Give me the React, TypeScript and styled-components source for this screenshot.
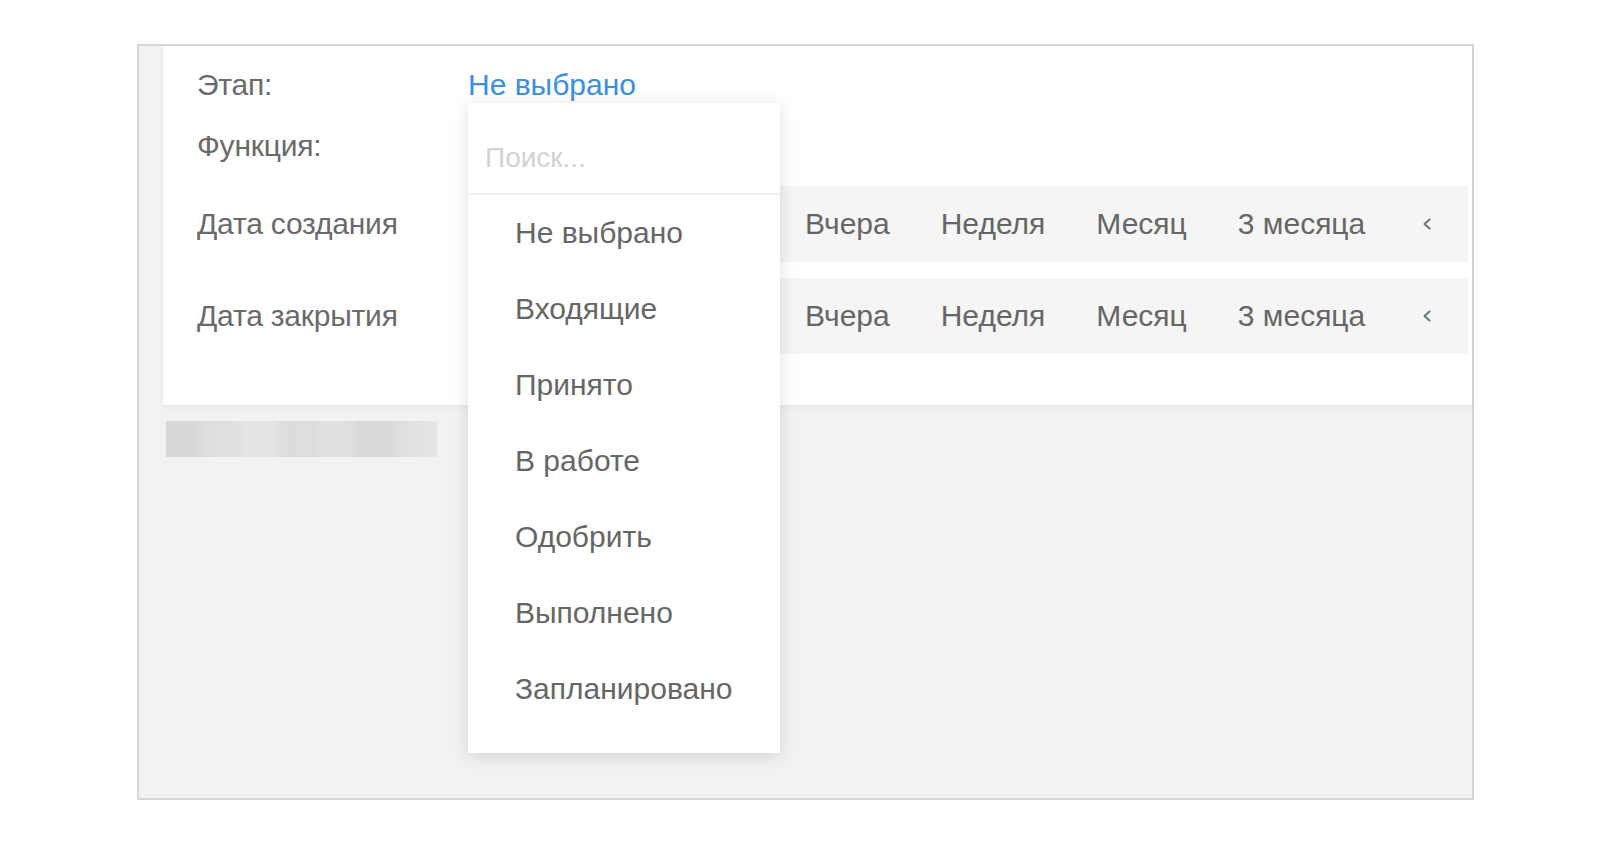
import React from "react";
import styled, { createGlobalStyle } from "styled-components";

const GlobalStyle = createGlobalStyle`
  html, body {
    margin: 0;
    padding: 0;
    background: #ffffff;
  }
  body {
    font-family: "Liberation Sans", Arial, sans-serif;
  }
`;

const Page = styled.div`
  width: 1600px;
  height: 845px;
  padding: 44px 0 0 137px;
  box-sizing: border-box;
`;

const Frame = styled.div`
  width: 1337px;
  height: 756px;
  box-sizing: border-box;
  border: 2px solid #d6d6d6;
  background: #f2f2f2;
  padding-left: 24px;
  display: flex;
  flex-direction: column;
`;

const Panel = styled.div`
  height: 359px;
  box-sizing: border-box;
  background: #ffffff;
  padding: 0 4px 0 34px;
  box-shadow: 0 2px 5px rgba(0, 0, 0, 0.05);
  display: grid;
  grid-template-columns: 271px 1fr;
  grid-template-rows: 78px 44px auto auto;
  align-content: start;
`;

const Label = styled.div<{ $mt?: number }>`
  display: flex;
  align-items: center;
  margin-top: ${(p) => p.$mt ?? 0}px;
  font-size: 30px;
  color: #6a6a6a;
  letter-spacing: -0.2px;
`;

const Cell = styled.div`
  position: relative;
  display: flex;
  align-items: center;
`;

const Trigger = styled.span`
  font-size: 30px;
  line-height: 34px;
  color: #3a8ee6;
  cursor: pointer;
`;

const Band = styled.div<{ $mt: number }>`
  margin-top: ${(p) => p.$mt}px;
  height: 76px;
  background: #f5f5f5;
  display: flex;
  align-items: center;
  gap: 51px;
  padding-left: 337px;
`;

const Period = styled.span`
  font-size: 30px;
  color: #666666;
  white-space: nowrap;
`;

const Chevron = styled.span`
  display: flex;
  margin-left: 6px;
  color: #6b7684;
`;

const Placeholder = styled.div`
  margin: 16px 0 0 3px;
  width: 271px;
  height: 36px;
  background: linear-gradient(
    90deg,
    #d7d7d7 0%,
    #d8d8d8 11%,
    #dedede 14%,
    #e0e0e0 26%,
    #e5e5e5 29%,
    #e4e4e4 40%,
    #dcdcdc 43%,
    #dddddd 55%,
    #e1e1e1 58%,
    #e0e0e0 68%,
    #d8d8d8 71%,
    #d9d9d9 82%,
    #dedede 86%,
    #e6e6e6 100%
  );
`;

const Menu = styled.div`
  position: absolute;
  left: 0;
  top: calc(50% + 18px);
  width: 312px;
  height: 650px;
  background: #ffffff;
  box-shadow: 0 3px 16px rgba(0, 0, 0, 0.13);
  z-index: 10;
  display: flex;
  flex-direction: column;
`;

const Search = styled.input`
  height: 92px;
  flex-shrink: 0;
  box-sizing: border-box;
  border: none;
  border-bottom: 2px solid #f0f0f0;
  outline: none;
  padding: 20px 0 0 17px;
  font-family: "Liberation Sans", Arial, sans-serif;
  font-size: 28px;
  color: #444;
  background: #fff;

  &::placeholder {
    color: #d2d2d2;
  }
`;

const Option = styled.div`
  height: 76px;
  flex-shrink: 0;
  display: flex;
  align-items: center;
  padding-left: 47px;
  font-size: 30px;
  color: #666666;
  cursor: pointer;
`;

const periods = ["Вчера", "Неделя", "Месяц", "3 месяца"];
const stages = [
  "Не выбрано",
  "Входящие",
  "Принято",
  "В работе",
  "Одобрить",
  "Выполнено",
  "Запланировано",
];

function ChevronLeft() {
  return (
    <svg width="10" height="12" viewBox="0 0 10 12">
      <polyline
        points="7.5,1.5 2.5,6 7.5,10.5"
        fill="none"
        stroke="currentColor"
        strokeWidth="2"
        strokeLinecap="round"
        strokeLinejoin="round"
      />
    </svg>
  );
}

function PeriodBand({ mt }: { mt: number }) {
  return (
    <Band $mt={mt}>
      {periods.map((p) => (
        <Period key={p}>{p}</Period>
      ))}
      <Chevron>
        <ChevronLeft />
      </Chevron>
    </Band>
  );
}

function App() {
  return (
    <>
      <GlobalStyle />
      <Page>
        <Frame>
          <Panel>
            <Label>Этап:</Label>
            <Cell>
              <Trigger>Не выбрано</Trigger>
              <Menu>
                <Search placeholder="Поиск..." />
                {stages.map((s) => (
                  <Option key={s}>{s}</Option>
                ))}
              </Menu>
            </Cell>

            <Label>Функция:</Label>
            <Cell />

            <Label $mt={18}>Дата создания</Label>
            <PeriodBand mt={18} />

            <Label $mt={16}>Дата закрытия</Label>
            <PeriodBand mt={16} />
          </Panel>
          <Placeholder />
        </Frame>
      </Page>
    </>
  );
}

export default App;
